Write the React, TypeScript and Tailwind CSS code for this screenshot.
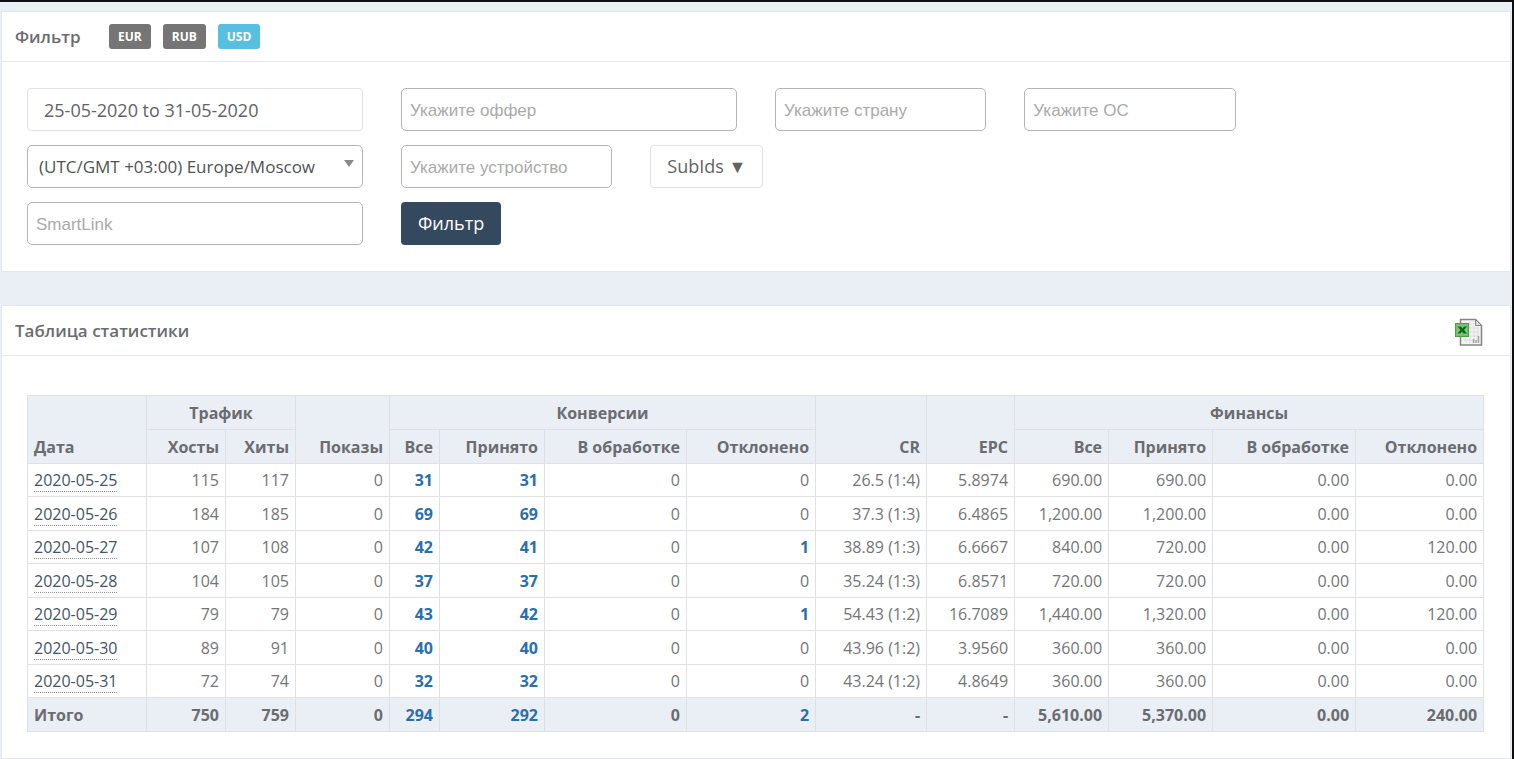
import { useState } from "react";
import { cva } from "class-variance-authority";
import clsx from "clsx";

type Currency = "EUR" | "RUB" | "USD";

interface StatRow {
  date: string;
  hosts: string;
  hits: string;
  views: string;
  conversions: string[];
  cr: string;
  epc: string;
  finance: string[];
}

const CURRENCIES: Currency[] = ["EUR", "RUB", "USD"];

const STATUSES = ["Все", "Принято", "В обработке", "Отклонено"];

const ROWS: StatRow[] = [
  { date: "2020-05-25", hosts: "115", hits: "117", views: "0", conversions: ["31", "31", "0", "0"], cr: "26.5 (1:4)", epc: "5.8974", finance: ["690.00", "690.00", "0.00", "0.00"] },
  { date: "2020-05-26", hosts: "184", hits: "185", views: "0", conversions: ["69", "69", "0", "0"], cr: "37.3 (1:3)", epc: "6.4865", finance: ["1,200.00", "1,200.00", "0.00", "0.00"] },
  { date: "2020-05-27", hosts: "107", hits: "108", views: "0", conversions: ["42", "41", "0", "1"], cr: "38.89 (1:3)", epc: "6.6667", finance: ["840.00", "720.00", "0.00", "120.00"] },
  { date: "2020-05-28", hosts: "104", hits: "105", views: "0", conversions: ["37", "37", "0", "0"], cr: "35.24 (1:3)", epc: "6.8571", finance: ["720.00", "720.00", "0.00", "0.00"] },
  { date: "2020-05-29", hosts: "79", hits: "79", views: "0", conversions: ["43", "42", "0", "1"], cr: "54.43 (1:2)", epc: "16.7089", finance: ["1,440.00", "1,320.00", "0.00", "120.00"] },
  { date: "2020-05-30", hosts: "89", hits: "91", views: "0", conversions: ["40", "40", "0", "0"], cr: "43.96 (1:2)", epc: "3.9560", finance: ["360.00", "360.00", "0.00", "0.00"] },
  { date: "2020-05-31", hosts: "72", hits: "74", views: "0", conversions: ["32", "32", "0", "0"], cr: "43.24 (1:2)", epc: "4.8649", finance: ["360.00", "360.00", "0.00", "0.00"] },
];

const TOTAL: StatRow = {
  date: "Итого",
  hosts: "750",
  hits: "759",
  views: "0",
  conversions: ["294", "292", "0", "2"],
  cr: "-",
  epc: "-",
  finance: ["5,610.00", "5,370.00", "0.00", "240.00"],
};

const COLUMNS = [
  "w-[119px]",
  "w-[79px]",
  "w-[70px]",
  "w-[94px]",
  "w-[50px]",
  "w-[105px]",
  "w-[142px]",
  "w-[129px]",
  "w-[111px]",
  "w-[88px]",
  "w-[94px]",
  "w-[104px]",
  "w-[143px]",
  "w-[128px]",
];

const cell = "border border-[#dfe1e5] px-[6px] py-0";

const badge = cva(
  "h-[25px] rounded-[3px] px-[9px] text-[12px] leading-[25px] font-bold text-white",
  {
    variants: {
      active: { true: "bg-[#57bfdf]", false: "bg-[#757575]" },
    },
  }
);

interface FieldProps {
  label: string;
  className?: string;
}

function Field({ label, className }: FieldProps) {
  return (
    <input
      type="text"
      aria-label={label}
      placeholder={label}
      className={clsx(
        "h-[43px] min-w-0 rounded-[5px] border border-[#b4b4b4] bg-white px-[8px] pt-[3px] font-['Liberation_Sans',Arial,sans-serif] text-[17px] text-[#555] outline-none placeholder:text-[#aaa]",
        className
      )}
    />
  );
}

function ExcelIcon() {
  return (
    <svg width="28" height="29" viewBox="0 0 28 29" aria-hidden="true">
      <path d="M5.5 1.5h15l6 6v19.500h-21z" fill="#f4f4f4" stroke="#858585" strokeWidth="1.500" />
      <path d="M20.500 1.500v6h6z" fill="#dcdcdc" stroke="#858585" />
      <path d="M8 6h11M8 10h16M8 14h16M8 18h16M8 22h16M11 4v21M15 4v21M19 8v17M23 9v16" stroke="#d9dce0" fill="none" />
      <path d="M18.500 25v-4M21 25v-3M23.500 25v-7" stroke="#a3a3ab" strokeWidth="1.500" />
      <rect x="0.500" y="5.500" width="13" height="13" fill="#6fbe6b" stroke="#4c9e4c" />
      <rect x="2" y="7" width="10" height="10" fill="#7cc676" />
      <path d="M2.500 8.500h3.500l1.500 2 1.500-2h3l-3 3.500 3 3.500h-3.500l-1.500-2-1.500 2h-3l3-3.500z" fill="#12661c" />
    </svg>
  );
}

function StatCells({ row }: { row: StatRow }) {
  return (
    <>
      <td className={cell}>{row.hosts}</td>
      <td className={cell}>{row.hits}</td>
      <td className={cell}>{row.views}</td>
      {row.conversions.map((value, i) => (
        <td key={i} className={cell}>
          {value === "0" ? (
            value
          ) : (
            <a href="#" className="font-bold text-[#2a6fad]">
              {value}
            </a>
          )}
        </td>
      ))}
      <td className={cell}>{row.cr}</td>
      <td className={cell}>{row.epc}</td>
      {row.finance.map((value, i) => (
        <td key={i} className={cell}>
          {value}
        </td>
      ))}
    </>
  );
}

function FilterPanel() {
  const [currency, setCurrency] = useState<Currency>("USD");

  return (
    <section className="border border-[#e3e6ec] bg-white">
      <header className="flex h-[50px] items-center border-b border-[#e7e8ec] px-[13px]">
        <h2 className="w-[94px] text-[17px] font-semibold">Фильтр</h2>
        <div className="flex gap-3">
          {CURRENCIES.map((item) => (
            <button
              key={item}
              type="button"
              onClick={() => setCurrency(item)}
              className={badge({ active: item === currency })}
            >
              {item}
            </button>
          ))}
        </div>
      </header>

      <form
        onSubmit={(e) => e.preventDefault()}
        className="grid grid-cols-12 gap-x-[38px] gap-y-[14px] px-[25px] pt-[26px] pb-[26px]"
      >
        <input
          type="text"
          aria-label="Период"
          defaultValue="25-05-2020 to 31-05-2020"
          className="col-span-3 h-[43px] min-w-0 rounded-[4px] border border-[#e2e2e4] px-[16px] text-[18px] text-[#616365] outline-none"
        />
        <Field label="Укажите оффер" className="col-span-3" />
        <Field label="Укажите страну" className="col-span-2" />
        <Field label="Укажите ОС" className="col-span-2" />

        <div className="relative col-span-3 col-start-1">
          <select
            aria-label="Часовой пояс"
            className="h-[43px] w-full appearance-none rounded-[5px] border border-[#b4b4b4] bg-white pr-[30px] pl-[11px] text-[17px] text-[#505254] outline-none"
          >
            <option>(UTC/GMT +03:00) Europe/Moscow</option>
          </select>
          <svg
            width="10"
            height="7"
            viewBox="0 0 10 7"
            aria-hidden="true"
            className="pointer-events-none absolute top-[15px] right-[9px]"
          >
            <path d="M0 0h10L5 7z" fill="#8a8a8a" />
          </svg>
        </div>
        <Field label="Укажите устройство" className="col-span-2" />
        <button
          type="button"
          className="col-span-2 h-[43px] justify-self-start rounded-[4px] border border-[#e2e2e4] px-[16px] text-[18px] whitespace-nowrap text-[#616365]"
        >
          SubIds ▼
        </button>

        <Field label="SmartLink" className="col-span-3 col-start-1" />
        <button
          type="submit"
          className="col-span-2 h-[43px] justify-self-start rounded-[4px] bg-[#34495e] px-[17px] text-[18px] text-white"
        >
          Фильтр
        </button>
      </form>
    </section>
  );
}

function StatsPanel() {
  return (
    <section className="grow border border-[#e3e6ec] bg-white pb-[26px]">
      <header className="flex h-[50px] items-center justify-between border-b border-[#e7e8ec] pr-[27px] pl-[13px]">
        <h2 className="text-[17px] font-semibold">Таблица статистики</h2>
        <button type="button" aria-label="Экспорт в Excel" className="pt-[4px]">
          <ExcelIcon />
        </button>
      </header>

      <div className="pt-[39px] pr-[27px] pl-[25px]">
        <table className="w-full table-fixed border-collapse text-right text-[16px] leading-[24px] text-[#737577]">
          <colgroup>
            {COLUMNS.map((width, i) => (
              <col key={i} className={width} />
            ))}
          </colgroup>
          <thead className="bg-[#eaeef5] font-bold text-[#6a6c70]">
            <tr className="h-[34px]">
              <th rowSpan={2} className={clsx(cell, "pb-[4px] text-left align-bottom")}>
                Дата
              </th>
              <th colSpan={2} className={clsx(cell, "text-center")}>
                Трафик
              </th>
              <th rowSpan={2} className={clsx(cell, "pb-[4px] align-bottom")}>
                Показы
              </th>
              <th colSpan={4} className={clsx(cell, "text-center")}>
                Конверсии
              </th>
              <th rowSpan={2} className={clsx(cell, "pb-[4px] align-bottom")}>
                CR
              </th>
              <th rowSpan={2} className={clsx(cell, "pb-[4px] align-bottom")}>
                EPC
              </th>
              <th colSpan={4} className={clsx(cell, "text-center")}>
                Финансы
              </th>
            </tr>
            <tr className="h-[34px]">
              {["Хосты", "Хиты", ...STATUSES, ...STATUSES].map((title, i) => (
                <th key={i} className={cell}>
                  {title}
                </th>
              ))}
            </tr>
          </thead>
          <tbody>
            {ROWS.map((row) => (
              <tr key={row.date} className="odd:h-[33px] even:h-[34px]">
                <td className={clsx(cell, "text-left")}>
                  <a
                    href="#"
                    className="inline-block border-b border-dotted border-[#8f8f8f] leading-[22px] text-[#455464]"
                  >
                    {row.date}
                  </a>
                </td>
                <StatCells row={row} />
              </tr>
            ))}
          </tbody>
          <tfoot className="bg-[#eaeef5] font-bold text-[#6a6c70]">
            <tr className="h-[34px]">
              <td className={clsx(cell, "text-left")}>{TOTAL.date}</td>
              <StatCells row={TOTAL} />
            </tr>
          </tfoot>
        </table>
      </div>
    </section>
  );
}

export default function App() {
  return (
    <div className="flex min-h-screen flex-col border-t-2 border-r-2 border-b border-[#0d0d0f] bg-[#eaeef5] font-['Open_Sans','Noto_Sans',sans-serif] text-[#6a6c70]">
      <main className="flex grow flex-col gap-[33px] pt-[9px] pr-px pl-px">
        <FilterPanel />
        <StatsPanel />
      </main>
    </div>
  );
}
